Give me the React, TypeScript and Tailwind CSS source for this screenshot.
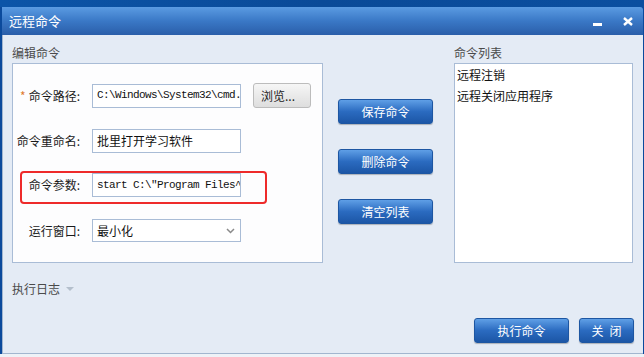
import React from "react";

const cjk = "font-['Noto_Sans_CJK_SC','Noto_Sans',sans-serif]";
const mono = "font-['Liberation_Mono','Noto_Sans_CJK_SC',monospace]";

function BlueButton({ label, className = "" }: { label: string; className?: string }) {
  return (
    <button
      className={`h-[25px] rounded-[3px] border border-[#1d56a2] bg-gradient-to-b from-[#5f9fe6] via-[#2b6bc0] to-[#1c56a6] text-white text-[12px] shadow-[0_1px_1px_rgba(0,0,0,0.25)] ${className}`}
    >
      {label}
    </button>
  );
}

function Field({ children }: { children: React.ReactNode }) {
  return (
    <div className="w-[149px] h-[24px] border border-[#a9bcd6] bg-white flex items-center px-[4px] overflow-hidden whitespace-nowrap">
      {children}
    </div>
  );
}

export default function App() {
  return (
    <div className={`w-[644px] h-[357px] overflow-hidden bg-[#0b4a9c] ${cjk}`}>
      {/* desktop strip */}
      <div className="h-[7px] bg-gradient-to-r from-[#0c55a8] via-[#0a4a98] to-[#0b4fa0]" />

      <div className="ml-[2px] w-[641px]">
        {/* title bar */}
        <div className="h-[28px] rounded-tr-[3px] bg-gradient-to-b from-[#5b9be2] via-[#3a78c6] to-[#2a5ea9] flex items-center pl-[7px] pr-[10px]">
          <span className="text-white text-[13px]">远程命令</span>
          <div className="ml-auto flex items-center gap-[21px]">
            <div className="w-[9px] h-[3px] bg-white mt-[6px]" />
            <svg width="10" height="9" viewBox="0 0 10 9">
              <path d="M1 1 L9 8 M9 1 L1 8" stroke="white" strokeWidth="2.4" />
            </svg>
          </div>
        </div>

        {/* body */}
        <div className="h-[319px] bg-[#e4ebf5] border-l border-b border-[#a2b6cf] pl-[9px] pr-[9px] pt-[8px] flex flex-col">
          <div className="flex">
            {/* edit group */}
            <div className="w-[311px] flex flex-col">
              <div className="h-[20px] flex items-center text-[12px] text-[#4a4a4a]">编辑命令</div>
              <div className="h-[200px] border border-[#a9bcd6] bg-[#fdfdfe] flex flex-col pt-[19px]">
                <div className="flex items-center h-[25px]">
                  <div className="w-[67px] text-right text-[12px] text-[#1a1a1a]">
                    <span className="text-[#e07a2e] mr-[3px]">*</span>命令路径:
                  </div>
                  <div className="ml-[12px] h-[25px] flex items-center">
                    <Field>
                      <span className={`${mono} text-[11px] tracking-[-0.6px] text-[#111]`}>C:\Windows\System32\cmd.</span>
                    </Field>
                  </div>
                  <button className="ml-[12px] w-[58px] h-[25px] rounded-[3px] border border-[#bcbcbc] bg-gradient-to-b from-[#f6f6f6] to-[#dedede] text-[12px] text-[#222] flex items-center pl-[7px]">
                    浏览...
                  </button>
                </div>

                <div className="flex items-center h-[24px] mt-[21px]">
                  <div className="w-[67px] text-right text-[12px] text-[#1a1a1a]">命令重命名:</div>
                  <div className="ml-[12px]">
                    <Field>
                      <span className="text-[12px] text-[#111]">批里打开学习软件</span>
                    </Field>
                  </div>
                </div>

                <div className="ml-[7px] mt-[18px] w-[247px] h-[33px] border-2 border-[#ee2a2a] rounded-[4px] flex items-start">
                  <div className="w-[58px] h-[24px] flex items-center justify-end text-[12px] text-[#1a1a1a]">命令参数:</div>
                  <div className="ml-[12px]">
                    <Field>
                      <span className={`${mono} text-[11px] tracking-[-0.6px] text-[#111]`}>start C:\"Program Files^</span>
                    </Field>
                  </div>
                </div>

                <div className="flex items-center h-[23px] mt-[15px]">
                  <div className="w-[67px] text-right text-[12px] text-[#1a1a1a]">运行窗口:</div>
                  <div className="ml-[12px] w-[149px] h-[23px] border border-[#a9bcd6] bg-white flex items-center pl-[4px] pr-[5px]">
                    <span className="text-[12px] text-[#111]">最小化</span>
                    <svg className="ml-auto" width="9" height="6" viewBox="0 0 9 6">
                      <path d="M1 1 L4.5 4.5 L8 1" stroke="#8a8a8a" strokeWidth="1.5" fill="none" />
                    </svg>
                  </div>
                </div>
              </div>
            </div>

            {/* middle buttons */}
            <div className="ml-[15px] w-[95px] flex flex-col pt-[56px] gap-[25px]">
              <BlueButton label="保存命令" className="w-[95px]" />
              <BlueButton label="删除命令" className="w-[95px]" />
              <BlueButton label="清空列表" className="w-[95px]" />
            </div>

            {/* command list */}
            <div className="ml-[21px] w-[179px] flex flex-col">
              <div className="h-[20px] flex items-center text-[12px] text-[#4a4a4a]">命令列表</div>
              <div className="h-[200px] border border-[#a9bcd6] bg-white px-[2px] text-[12px] text-[#111] leading-[21px]">
                <div>远程注销</div>
                <div>远程关闭应用程序</div>
              </div>
            </div>
          </div>

          <div className="mt-[17px] flex items-center gap-[6px] text-[12px] text-[#4a4a4a]">
            执行日志
            <svg width="8" height="5" viewBox="0 0 8 5">
              <path d="M0 0 L8 0 L4 4 Z" fill="#b4bfcc" />
            </svg>
          </div>

          <div className="mt-auto mb-[10px] flex justify-end gap-[10px]">
            <BlueButton label="执行命令" className="w-[95px]" />
            <BlueButton label={"关\u2002闭"} className="w-[55px]" />
          </div>
        </div>
      </div>
      <div className="h-[3px] bg-[#eef2f7]" />
    </div>
  );
}
